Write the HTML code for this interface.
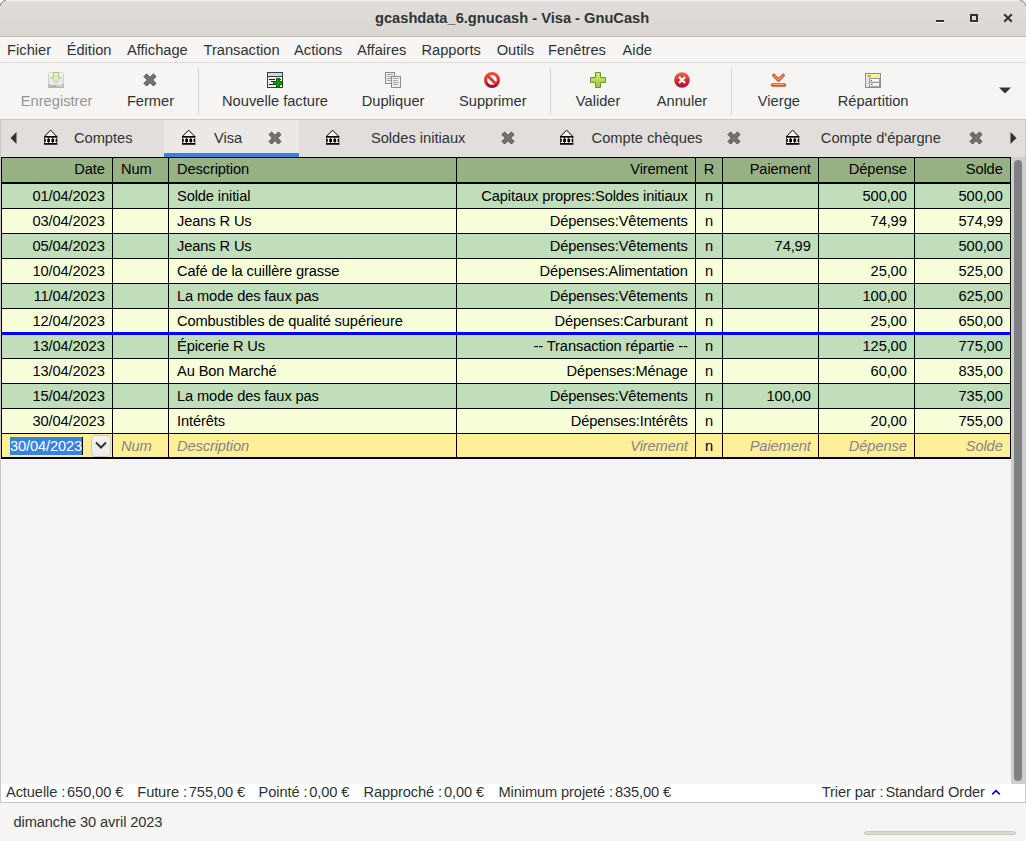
<!DOCTYPE html><html><head><meta charset="utf-8"><style>
*{margin:0;padding:0;box-sizing:border-box}
html,body{width:1026px;height:841px;overflow:hidden;background:#f6f5f4;font-family:"Liberation Sans", sans-serif;font-size:14.667px;color:#2e3436}
.a{position:absolute}
.t{position:absolute;line-height:17px;white-space:nowrap}
.c{position:absolute;line-height:17px;white-space:nowrap;text-align:center;width:160px}
.r{position:absolute;line-height:17px;white-space:nowrap;text-align:right}
.g{letter-spacing:-0.12px}
</style></head><body>
<div class="a" style="left:0;top:0;width:12px;height:12px;background:#fafafa"></div>
<div class="a" style="left:1014px;top:0;width:12px;height:12px;background:#fafafa"></div>
<div class="a" style="left:0;top:0;width:1026px;height:37px;background:linear-gradient(to top,#dad6d2,#e1dedb);border-radius:6px 6px 0 0;border-bottom:1px solid #bfb8b1;box-shadow:inset 0 1px 0 rgba(255,255,255,0.6)"></div>
<svg class="a" style="left:0;top:0" width="1026" height="12"><path d="M0.5 6A5.5 5.5 0 0 1 6 0.5" fill="none" stroke="#5a5a5a" stroke-opacity="0.7"/><path d="M1025.5 6A5.5 5.5 0 0 0 1020 0.5" fill="none" stroke="#5a5a5a" stroke-opacity="0.7"/></svg>
<div class="t" style="left:375px;top:10px;font-weight:bold;color:#2e3436">gcashdata_6.gnucash - Visa - GnuCash</div>
<div class="a" style="left:936px;top:20px;width:8px;height:2px;background:#2e3436;box-shadow:0 1px 0 rgba(255,255,255,0.8)"></div>
<div class="a" style="left:970px;top:14px;width:8px;height:8px;border:2px solid #2e3436;box-shadow:0 1px 0 rgba(255,255,255,0.8)"></div>
<svg class="a" style="left:1003px;top:13px" width="10" height="10" viewBox="0 0 10 10"><path d="M1.2 1.2L8.8 8.8M8.8 1.2L1.2 8.8" stroke="#2e3436" stroke-width="2"/></svg>
<div class="a" style="left:0;top:37px;width:1026px;height:26px;background:#f6f5f4;border-bottom:1px solid #dcdad8"></div>
<div class="t" style="left:7.1px;top:42px">Fichier</div>
<div class="t" style="left:66.7px;top:42px">Édition</div>
<div class="t" style="left:126.9px;top:42px">Affichage</div>
<div class="t" style="left:203.5px;top:42px">Transaction</div>
<div class="t" style="left:294.1px;top:42px">Actions</div>
<div class="t" style="left:357.0px;top:42px">Affaires</div>
<div class="t" style="left:421.4px;top:42px">Rapports</div>
<div class="t" style="left:496.7px;top:42px">Outils</div>
<div class="t" style="left:548.1px;top:42px">Fenêtres</div>
<div class="t" style="left:622.6px;top:42px">Aide</div>
<div class="a" style="left:0;top:63px;width:1026px;height:57px;background:#f6f5f4;border-bottom:1px solid #cdc7c2"></div>
<div class="c" style="left:-23.4px;top:93px;color:#929595">Enregistrer</div>
<div class="c" style="left:70.5px;top:93px;color:#2e3436">Fermer</div>
<div class="c" style="left:195.0px;top:93px;color:#2e3436">Nouvelle facture</div>
<div class="c" style="left:313.1px;top:93px;color:#2e3436">Dupliquer</div>
<div class="c" style="left:412.8px;top:93px;color:#2e3436">Supprimer</div>
<div class="c" style="left:518.1px;top:93px;color:#2e3436">Valider</div>
<div class="c" style="left:602.0px;top:93px;color:#2e3436">Annuler</div>
<div class="c" style="left:698.9px;top:93px;color:#2e3436">Vierge</div>
<div class="c" style="left:793.1px;top:93px;color:#2e3436">Répartition</div>
<div class="a" style="left:198px;top:67px;width:1px;height:48px;background:#d8d4d0"></div>
<div class="a" style="left:550px;top:67px;width:1px;height:48px;background:#d8d4d0"></div>
<div class="a" style="left:731px;top:67px;width:1px;height:48px;background:#d8d4d0"></div>
<svg class="a" style="left:998px;top:86px" width="14" height="8"><path d="M1 1.5H13L7 7.5Z" fill="#2e3436"/></svg>
<svg class="a" style="left:48px;top:72px" width="16" height="16" viewBox="0 0 16 16"><defs><linearGradient id="sg" x1="0" y1="0" x2="0" y2="1"><stop offset="0" stop-color="#f6f6f6"/><stop offset="1" stop-color="#e2e2e2"/></linearGradient></defs><path d="M1.5 0.5H14.5Q15.5 0.5 15.5 1.5V15.5H0.5V1.5Q0.5 0.5 1.5 0.5Z" fill="url(#sg)" stroke="#cfcfcf"/><rect x="0.5" y="12.5" width="15" height="3" fill="#cacaca" stroke="#b8b8b8"/><path d="M2 12.2H14" stroke="#fafafa"/><path d="M3 2.5V7M13 2.5V7" stroke="#e0e0e0"/><path d="M5.5 0.5H10.5V5.5H12.8L8 10.9L3.2 5.5H5.5Z" fill="#e2edbb" stroke="#a9ce8c"/><path d="M2 14H8.5" stroke="#9a9a9a"/></svg>
<svg class="a" style="left:142px;top:72px" width="16" height="16" viewBox="0 0 16 16"><path d="M2 4.6L4.6 2L8 5.4L11.4 2L14 4.6L10.6 8L14 11.4L11.4 14L8 10.6L4.6 14L2 11.4L5.4 8Z" fill="#737371" stroke="#4a4a48" stroke-width="1" stroke-linejoin="round"/></svg>
<svg class="a" style="left:267px;top:72px" width="16" height="16" viewBox="0 0 16 16"><rect x="0.5" y="0.5" width="15" height="15" fill="#ecebe9" stroke="#3c3c3c"/><rect x="1" y="1" width="14" height="3.5" fill="#c6dcf2"/><path d="M0.5 4.5H15.5" stroke="#3c3c3c"/><path d="M2 7.5H8M4 9.5H7M2 12.5H7" stroke="#222"/><path d="M12 7.5H14" stroke="#333"/><path d="M9.5 6.5H12.5V9.5H15.5V12.5H12.5V15.5H9.5V12.5H6.5V9.5H9.5Z" fill="#00a000" stroke="#005c00"/></svg>
<svg class="a" style="left:385px;top:72px" width="16" height="16" viewBox="0 0 16 16"><rect x="0.5" y="0.5" width="9" height="11" fill="#efefee" stroke="#8c8c8a"/><path d="M2 2.5H8M2 4.5H8M2 6.5H8M2 8.5H8" stroke="#a6a6a4"/><rect x="6.5" y="4.5" width="9" height="11" fill="#efefee" stroke="#8c8c8a"/><path d="M8 6.5H14M8 8.5H12.5M8 10.5H14M8 12.5H13" stroke="#a6a6a4"/></svg>
<svg class="a" style="left:484px;top:72px" width="16" height="16" viewBox="0 0 16 16"><defs><linearGradient id="dg" x1="0" y1="0" x2="0" y2="1"><stop offset="0" stop-color="#e8503a"/><stop offset="0.6" stop-color="#d03030"/><stop offset="1" stop-color="#98103c"/></linearGradient></defs><circle cx="8" cy="8" r="6.4" fill="#fbf5f5" stroke="url(#dg)" stroke-width="3.2"/><path d="M4.2 4.2L11.8 11.8" stroke="#d23838" stroke-width="2.8"/></svg>
<svg class="a" style="left:590px;top:72px" width="16" height="16" viewBox="0 0 16 16"><defs><linearGradient id="pg" x1="0" y1="0" x2="0" y2="1"><stop offset="0" stop-color="#d8ea6e"/><stop offset="1" stop-color="#a4c03a"/></linearGradient></defs><path d="M5.5 0.5H10.5V5.5H15.5V10.5H10.5V15.5H5.5V10.5H0.5V5.5H5.5Z" fill="url(#pg)" stroke="#5f9a2e"/></svg>
<svg class="a" style="left:674px;top:72px" width="16" height="16" viewBox="0 0 16 16"><defs><linearGradient id="cg" x1="0" y1="0" x2="0" y2="1"><stop offset="0" stop-color="#ee6a52"/><stop offset="0.55" stop-color="#d82a2a"/><stop offset="1" stop-color="#9c1040"/></linearGradient></defs><circle cx="8" cy="8" r="7.8" fill="url(#cg)"/><path d="M5 5L11 11M11 5L5 11" stroke="#fff" stroke-width="2.3"/></svg>
<svg class="a" style="left:770px;top:72px" width="16" height="16" viewBox="0 0 16 16"><path d="M3.8 3.4L8.5 8.1L13.2 3.4" fill="none" stroke="#c84c12" stroke-width="3.4" stroke-linecap="round" stroke-linejoin="round"/><path d="M3.8 3.4L8.5 8.1L13.2 3.4" fill="none" stroke="#f3a676" stroke-width="1.3" stroke-linecap="round" stroke-linejoin="round"/><path d="M2.7 13H14.3" stroke="#c84c12" stroke-width="3.6" stroke-linecap="round"/><path d="M2.7 12.6H14.3" stroke="#f3a676" stroke-width="1.1" stroke-linecap="round"/></svg>
<svg class="a" style="left:865px;top:72px" width="16" height="16" viewBox="0 0 16 16"><rect x="0.5" y="1.5" width="15" height="14" fill="#e4e4e4" stroke="#8e8e8e"/><rect x="1" y="2" width="14" height="3.6" fill="#f7f290"/><path d="M2.5 4H6" stroke="#6a6a50"/><rect x="4.5" y="6.5" width="10" height="3.6" fill="#fff" stroke="#959595"/><rect x="4.5" y="10.7" width="10" height="3.6" fill="#fff" stroke="#959595"/><circle cx="6.5" cy="8.4" r="0.6" fill="#444"/><path d="M6 12.5H7.5" stroke="#555"/></svg>
<div class="a" style="left:0;top:120px;width:1026px;height:37px;background:#e1dedb"></div>
<div class="a" style="left:164px;top:120px;width:135px;height:37px;background:#ebe8e6"></div>
<div class="a" style="left:164px;top:153px;width:135px;height:4px;background:#3584e4"></div>
<svg class="a" style="left:9px;top:131px" width="8" height="14"><path d="M7.5 1V13L1.5 7Z" fill="#2e3436"/></svg>
<svg class="a" style="left:1010px;top:131px" width="8" height="14"><path d="M0.5 1V13L6.5 7Z" fill="#2e3436"/></svg>
<svg class="a" style="left:44px;top:129px" width="14" height="16" viewBox="0 0 14 16"><path d="M6.6 1.1L12.9 7.6H0.3Z" fill="#f4f4f4" stroke="#000" stroke-width="1" stroke-linejoin="round"/><rect x="0" y="7.3" width="13.4" height="1.4" fill="#000"/><rect x="0.2" y="8.6" width="13" height="5.5" fill="#000"/><path d="M0.80 8.7H4.20V9.8H3.20V12.9H4.20V14H0.80V12.9H1.80V9.8H0.80Z M5.00 8.7H8.40V9.8H7.40V12.9H8.40V14H5.00V12.9H6.00V9.8H5.00Z M9.20 8.7H12.60V9.8H11.60V12.9H12.60V14H9.20V12.9H10.20V9.8H9.20Z" fill="#fff"/><rect x="0" y="14" width="13.4" height="1.8" rx="0.3" fill="#000"/></svg>
<div class="t" style="left:73.9px;top:130px">Comptes</div>
<svg class="a" style="left:182px;top:129px" width="14" height="16" viewBox="0 0 14 16"><path d="M6.6 1.1L12.9 7.6H0.3Z" fill="#f4f4f4" stroke="#000" stroke-width="1" stroke-linejoin="round"/><rect x="0" y="7.3" width="13.4" height="1.4" fill="#000"/><rect x="0.2" y="8.6" width="13" height="5.5" fill="#000"/><path d="M0.80 8.7H4.20V9.8H3.20V12.9H4.20V14H0.80V12.9H1.80V9.8H0.80Z M5.00 8.7H8.40V9.8H7.40V12.9H8.40V14H5.00V12.9H6.00V9.8H5.00Z M9.20 8.7H12.60V9.8H11.60V12.9H12.60V14H9.20V12.9H10.20V9.8H9.20Z" fill="#fff"/><rect x="0" y="14" width="13.4" height="1.8" rx="0.3" fill="#000"/></svg>
<div class="t" style="left:214.0px;top:130px">Visa</div>
<svg class="a" style="left:267px;top:130px" width="16" height="16" viewBox="0 0 16 16"><path d="M2 4.6L4.6 2L8 5.4L11.4 2L14 4.6L10.6 8L14 11.4L11.4 14L8 10.6L4.6 14L2 11.4L5.4 8Z" fill="#737371" stroke="#4a4a48" stroke-width="1" stroke-linejoin="round"/></svg>
<svg class="a" style="left:326px;top:129px" width="14" height="16" viewBox="0 0 14 16"><path d="M6.6 1.1L12.9 7.6H0.3Z" fill="#f4f4f4" stroke="#000" stroke-width="1" stroke-linejoin="round"/><rect x="0" y="7.3" width="13.4" height="1.4" fill="#000"/><rect x="0.2" y="8.6" width="13" height="5.5" fill="#000"/><path d="M0.80 8.7H4.20V9.8H3.20V12.9H4.20V14H0.80V12.9H1.80V9.8H0.80Z M5.00 8.7H8.40V9.8H7.40V12.9H8.40V14H5.00V12.9H6.00V9.8H5.00Z M9.20 8.7H12.60V9.8H11.60V12.9H12.60V14H9.20V12.9H10.20V9.8H9.20Z" fill="#fff"/><rect x="0" y="14" width="13.4" height="1.8" rx="0.3" fill="#000"/></svg>
<div class="t" style="left:370.9px;top:130px">Soldes initiaux</div>
<svg class="a" style="left:500px;top:130px" width="16" height="16" viewBox="0 0 16 16"><path d="M2 4.6L4.6 2L8 5.4L11.4 2L14 4.6L10.6 8L14 11.4L11.4 14L8 10.6L4.6 14L2 11.4L5.4 8Z" fill="#737371" stroke="#4a4a48" stroke-width="1" stroke-linejoin="round"/></svg>
<svg class="a" style="left:560px;top:129px" width="14" height="16" viewBox="0 0 14 16"><path d="M6.6 1.1L12.9 7.6H0.3Z" fill="#f4f4f4" stroke="#000" stroke-width="1" stroke-linejoin="round"/><rect x="0" y="7.3" width="13.4" height="1.4" fill="#000"/><rect x="0.2" y="8.6" width="13" height="5.5" fill="#000"/><path d="M0.80 8.7H4.20V9.8H3.20V12.9H4.20V14H0.80V12.9H1.80V9.8H0.80Z M5.00 8.7H8.40V9.8H7.40V12.9H8.40V14H5.00V12.9H6.00V9.8H5.00Z M9.20 8.7H12.60V9.8H11.60V12.9H12.60V14H9.20V12.9H10.20V9.8H9.20Z" fill="#fff"/><rect x="0" y="14" width="13.4" height="1.8" rx="0.3" fill="#000"/></svg>
<div class="t" style="left:591.6px;top:130px">Compte chèques</div>
<svg class="a" style="left:726px;top:130px" width="16" height="16" viewBox="0 0 16 16"><path d="M2 4.6L4.6 2L8 5.4L11.4 2L14 4.6L10.6 8L14 11.4L11.4 14L8 10.6L4.6 14L2 11.4L5.4 8Z" fill="#737371" stroke="#4a4a48" stroke-width="1" stroke-linejoin="round"/></svg>
<svg class="a" style="left:786px;top:129px" width="14" height="16" viewBox="0 0 14 16"><path d="M6.6 1.1L12.9 7.6H0.3Z" fill="#f4f4f4" stroke="#000" stroke-width="1" stroke-linejoin="round"/><rect x="0" y="7.3" width="13.4" height="1.4" fill="#000"/><rect x="0.2" y="8.6" width="13" height="5.5" fill="#000"/><path d="M0.80 8.7H4.20V9.8H3.20V12.9H4.20V14H0.80V12.9H1.80V9.8H0.80Z M5.00 8.7H8.40V9.8H7.40V12.9H8.40V14H5.00V12.9H6.00V9.8H5.00Z M9.20 8.7H12.60V9.8H11.60V12.9H12.60V14H9.20V12.9H10.20V9.8H9.20Z" fill="#fff"/><rect x="0" y="14" width="13.4" height="1.8" rx="0.3" fill="#000"/></svg>
<div class="t" style="left:820.8px;top:130px">Compte d'épargne</div>
<svg class="a" style="left:968px;top:130px" width="16" height="16" viewBox="0 0 16 16"><path d="M2 4.6L4.6 2L8 5.4L11.4 2L14 4.6L10.6 8L14 11.4L11.4 14L8 10.6L4.6 14L2 11.4L5.4 8Z" fill="#737371" stroke="#4a4a48" stroke-width="1" stroke-linejoin="round"/></svg>
<div class="a" style="left:1px;top:157px;width:1010px;height:302px;background:#000"></div>
<div class="a" style="left:2px;top:158px;width:110px;height:24px;background:#96b183"></div>
<div class="a" style="left:113px;top:158px;width:55px;height:24px;background:#96b183"></div>
<div class="a" style="left:169px;top:158px;width:287px;height:24px;background:#96b183"></div>
<div class="a" style="left:457px;top:158px;width:238px;height:24px;background:#96b183"></div>
<div class="a" style="left:696px;top:158px;width:26px;height:24px;background:#96b183"></div>
<div class="a" style="left:723px;top:158px;width:95px;height:24px;background:#96b183"></div>
<div class="a" style="left:819px;top:158px;width:95px;height:24px;background:#96b183"></div>
<div class="a" style="left:915px;top:158px;width:95px;height:24px;background:#96b183"></div>
<div class="r g" style="left:1px;width:103.7px;top:161px;color:#000">Date</div>
<div class="t g" style="left:121px;top:161px;color:#000">Num</div>
<div class="t g" style="left:177px;top:161px;color:#000">Description</div>
<div class="r g" style="left:456px;width:231.7px;top:161px;color:#000">Virement</div>
<div class="t" style="left:695px;width:28px;text-align:center;top:161px;color:#000">R</div>
<div class="r g" style="left:722px;width:88.7px;top:161px;color:#000">Paiement</div>
<div class="r g" style="left:818px;width:88.7px;top:161px;color:#000">Dépense</div>
<div class="r g" style="left:914px;width:88.7px;top:161px;color:#000">Solde</div>
<div class="a" style="left:2px;top:184px;width:110px;height:24px;background:#bfdeb9"></div>
<div class="a" style="left:113px;top:184px;width:55px;height:24px;background:#bfdeb9"></div>
<div class="a" style="left:169px;top:184px;width:287px;height:24px;background:#bfdeb9"></div>
<div class="a" style="left:457px;top:184px;width:238px;height:24px;background:#bfdeb9"></div>
<div class="a" style="left:696px;top:184px;width:26px;height:24px;background:#bfdeb9"></div>
<div class="a" style="left:723px;top:184px;width:95px;height:24px;background:#bfdeb9"></div>
<div class="a" style="left:819px;top:184px;width:95px;height:24px;background:#bfdeb9"></div>
<div class="a" style="left:915px;top:184px;width:95px;height:24px;background:#bfdeb9"></div>
<div class="r g" style="left:1px;width:103.7px;top:188px;color:#000">01/04/2023</div>
<div class="t g" style="left:177px;top:188px;color:#000">Solde initial</div>
<div class="r g" style="left:456px;width:231.7px;top:188px;color:#000">Capitaux propres:Soldes initiaux</div>
<div class="t" style="left:695px;width:28px;text-align:center;top:188px;color:#000">n</div>
<div class="r g" style="left:818px;width:88.7px;top:188px;color:#000">500,00</div>
<div class="r g" style="left:914px;width:88.7px;top:188px;color:#000">500,00</div>
<div class="a" style="left:2px;top:209px;width:110px;height:24px;background:#f6ffda"></div>
<div class="a" style="left:113px;top:209px;width:55px;height:24px;background:#f6ffda"></div>
<div class="a" style="left:169px;top:209px;width:287px;height:24px;background:#f6ffda"></div>
<div class="a" style="left:457px;top:209px;width:238px;height:24px;background:#f6ffda"></div>
<div class="a" style="left:696px;top:209px;width:26px;height:24px;background:#f6ffda"></div>
<div class="a" style="left:723px;top:209px;width:95px;height:24px;background:#f6ffda"></div>
<div class="a" style="left:819px;top:209px;width:95px;height:24px;background:#f6ffda"></div>
<div class="a" style="left:915px;top:209px;width:95px;height:24px;background:#f6ffda"></div>
<div class="r g" style="left:1px;width:103.7px;top:213px;color:#000">03/04/2023</div>
<div class="t g" style="left:177px;top:213px;color:#000">Jeans R Us</div>
<div class="r g" style="left:456px;width:231.7px;top:213px;color:#000">Dépenses:Vêtements</div>
<div class="t" style="left:695px;width:28px;text-align:center;top:213px;color:#000">n</div>
<div class="r g" style="left:818px;width:88.7px;top:213px;color:#000">74,99</div>
<div class="r g" style="left:914px;width:88.7px;top:213px;color:#000">574,99</div>
<div class="a" style="left:2px;top:234px;width:110px;height:24px;background:#bfdeb9"></div>
<div class="a" style="left:113px;top:234px;width:55px;height:24px;background:#bfdeb9"></div>
<div class="a" style="left:169px;top:234px;width:287px;height:24px;background:#bfdeb9"></div>
<div class="a" style="left:457px;top:234px;width:238px;height:24px;background:#bfdeb9"></div>
<div class="a" style="left:696px;top:234px;width:26px;height:24px;background:#bfdeb9"></div>
<div class="a" style="left:723px;top:234px;width:95px;height:24px;background:#bfdeb9"></div>
<div class="a" style="left:819px;top:234px;width:95px;height:24px;background:#bfdeb9"></div>
<div class="a" style="left:915px;top:234px;width:95px;height:24px;background:#bfdeb9"></div>
<div class="r g" style="left:1px;width:103.7px;top:238px;color:#000">05/04/2023</div>
<div class="t g" style="left:177px;top:238px;color:#000">Jeans R Us</div>
<div class="r g" style="left:456px;width:231.7px;top:238px;color:#000">Dépenses:Vêtements</div>
<div class="t" style="left:695px;width:28px;text-align:center;top:238px;color:#000">n</div>
<div class="r g" style="left:722px;width:88.7px;top:238px;color:#000">74,99</div>
<div class="r g" style="left:914px;width:88.7px;top:238px;color:#000">500,00</div>
<div class="a" style="left:2px;top:259px;width:110px;height:24px;background:#f6ffda"></div>
<div class="a" style="left:113px;top:259px;width:55px;height:24px;background:#f6ffda"></div>
<div class="a" style="left:169px;top:259px;width:287px;height:24px;background:#f6ffda"></div>
<div class="a" style="left:457px;top:259px;width:238px;height:24px;background:#f6ffda"></div>
<div class="a" style="left:696px;top:259px;width:26px;height:24px;background:#f6ffda"></div>
<div class="a" style="left:723px;top:259px;width:95px;height:24px;background:#f6ffda"></div>
<div class="a" style="left:819px;top:259px;width:95px;height:24px;background:#f6ffda"></div>
<div class="a" style="left:915px;top:259px;width:95px;height:24px;background:#f6ffda"></div>
<div class="r g" style="left:1px;width:103.7px;top:263px;color:#000">10/04/2023</div>
<div class="t g" style="left:177px;top:263px;color:#000">Café de la cuillère grasse</div>
<div class="r g" style="left:456px;width:231.7px;top:263px;color:#000">Dépenses:Alimentation</div>
<div class="t" style="left:695px;width:28px;text-align:center;top:263px;color:#000">n</div>
<div class="r g" style="left:818px;width:88.7px;top:263px;color:#000">25,00</div>
<div class="r g" style="left:914px;width:88.7px;top:263px;color:#000">525,00</div>
<div class="a" style="left:2px;top:284px;width:110px;height:24px;background:#bfdeb9"></div>
<div class="a" style="left:113px;top:284px;width:55px;height:24px;background:#bfdeb9"></div>
<div class="a" style="left:169px;top:284px;width:287px;height:24px;background:#bfdeb9"></div>
<div class="a" style="left:457px;top:284px;width:238px;height:24px;background:#bfdeb9"></div>
<div class="a" style="left:696px;top:284px;width:26px;height:24px;background:#bfdeb9"></div>
<div class="a" style="left:723px;top:284px;width:95px;height:24px;background:#bfdeb9"></div>
<div class="a" style="left:819px;top:284px;width:95px;height:24px;background:#bfdeb9"></div>
<div class="a" style="left:915px;top:284px;width:95px;height:24px;background:#bfdeb9"></div>
<div class="r g" style="left:1px;width:103.7px;top:288px;color:#000">11/04/2023</div>
<div class="t g" style="left:177px;top:288px;color:#000">La mode des faux pas</div>
<div class="r g" style="left:456px;width:231.7px;top:288px;color:#000">Dépenses:Vêtements</div>
<div class="t" style="left:695px;width:28px;text-align:center;top:288px;color:#000">n</div>
<div class="r g" style="left:818px;width:88.7px;top:288px;color:#000">100,00</div>
<div class="r g" style="left:914px;width:88.7px;top:288px;color:#000">625,00</div>
<div class="a" style="left:2px;top:309px;width:110px;height:24px;background:#f6ffda"></div>
<div class="a" style="left:113px;top:309px;width:55px;height:24px;background:#f6ffda"></div>
<div class="a" style="left:169px;top:309px;width:287px;height:24px;background:#f6ffda"></div>
<div class="a" style="left:457px;top:309px;width:238px;height:24px;background:#f6ffda"></div>
<div class="a" style="left:696px;top:309px;width:26px;height:24px;background:#f6ffda"></div>
<div class="a" style="left:723px;top:309px;width:95px;height:24px;background:#f6ffda"></div>
<div class="a" style="left:819px;top:309px;width:95px;height:24px;background:#f6ffda"></div>
<div class="a" style="left:915px;top:309px;width:95px;height:24px;background:#f6ffda"></div>
<div class="r g" style="left:1px;width:103.7px;top:313px;color:#000">12/04/2023</div>
<div class="t g" style="left:177px;top:313px;color:#000">Combustibles de qualité supérieure</div>
<div class="r g" style="left:456px;width:231.7px;top:313px;color:#000">Dépenses:Carburant</div>
<div class="t" style="left:695px;width:28px;text-align:center;top:313px;color:#000">n</div>
<div class="r g" style="left:818px;width:88.7px;top:313px;color:#000">25,00</div>
<div class="r g" style="left:914px;width:88.7px;top:313px;color:#000">650,00</div>
<div class="a" style="left:2px;top:334px;width:110px;height:24px;background:#bfdeb9"></div>
<div class="a" style="left:113px;top:334px;width:55px;height:24px;background:#bfdeb9"></div>
<div class="a" style="left:169px;top:334px;width:287px;height:24px;background:#bfdeb9"></div>
<div class="a" style="left:457px;top:334px;width:238px;height:24px;background:#bfdeb9"></div>
<div class="a" style="left:696px;top:334px;width:26px;height:24px;background:#bfdeb9"></div>
<div class="a" style="left:723px;top:334px;width:95px;height:24px;background:#bfdeb9"></div>
<div class="a" style="left:819px;top:334px;width:95px;height:24px;background:#bfdeb9"></div>
<div class="a" style="left:915px;top:334px;width:95px;height:24px;background:#bfdeb9"></div>
<div class="r g" style="left:1px;width:103.7px;top:338px;color:#000">13/04/2023</div>
<div class="t g" style="left:177px;top:338px;color:#000">Épicerie R Us</div>
<div class="r g" style="left:456px;width:231.7px;top:338px;color:#000">-- Transaction répartie --</div>
<div class="t" style="left:695px;width:28px;text-align:center;top:338px;color:#000">n</div>
<div class="r g" style="left:818px;width:88.7px;top:338px;color:#000">125,00</div>
<div class="r g" style="left:914px;width:88.7px;top:338px;color:#000">775,00</div>
<div class="a" style="left:2px;top:359px;width:110px;height:24px;background:#f6ffda"></div>
<div class="a" style="left:113px;top:359px;width:55px;height:24px;background:#f6ffda"></div>
<div class="a" style="left:169px;top:359px;width:287px;height:24px;background:#f6ffda"></div>
<div class="a" style="left:457px;top:359px;width:238px;height:24px;background:#f6ffda"></div>
<div class="a" style="left:696px;top:359px;width:26px;height:24px;background:#f6ffda"></div>
<div class="a" style="left:723px;top:359px;width:95px;height:24px;background:#f6ffda"></div>
<div class="a" style="left:819px;top:359px;width:95px;height:24px;background:#f6ffda"></div>
<div class="a" style="left:915px;top:359px;width:95px;height:24px;background:#f6ffda"></div>
<div class="r g" style="left:1px;width:103.7px;top:363px;color:#000">13/04/2023</div>
<div class="t g" style="left:177px;top:363px;color:#000">Au Bon Marché</div>
<div class="r g" style="left:456px;width:231.7px;top:363px;color:#000">Dépenses:Ménage</div>
<div class="t" style="left:695px;width:28px;text-align:center;top:363px;color:#000">n</div>
<div class="r g" style="left:818px;width:88.7px;top:363px;color:#000">60,00</div>
<div class="r g" style="left:914px;width:88.7px;top:363px;color:#000">835,00</div>
<div class="a" style="left:2px;top:384px;width:110px;height:24px;background:#bfdeb9"></div>
<div class="a" style="left:113px;top:384px;width:55px;height:24px;background:#bfdeb9"></div>
<div class="a" style="left:169px;top:384px;width:287px;height:24px;background:#bfdeb9"></div>
<div class="a" style="left:457px;top:384px;width:238px;height:24px;background:#bfdeb9"></div>
<div class="a" style="left:696px;top:384px;width:26px;height:24px;background:#bfdeb9"></div>
<div class="a" style="left:723px;top:384px;width:95px;height:24px;background:#bfdeb9"></div>
<div class="a" style="left:819px;top:384px;width:95px;height:24px;background:#bfdeb9"></div>
<div class="a" style="left:915px;top:384px;width:95px;height:24px;background:#bfdeb9"></div>
<div class="r g" style="left:1px;width:103.7px;top:388px;color:#000">15/04/2023</div>
<div class="t g" style="left:177px;top:388px;color:#000">La mode des faux pas</div>
<div class="r g" style="left:456px;width:231.7px;top:388px;color:#000">Dépenses:Vêtements</div>
<div class="t" style="left:695px;width:28px;text-align:center;top:388px;color:#000">n</div>
<div class="r g" style="left:722px;width:88.7px;top:388px;color:#000">100,00</div>
<div class="r g" style="left:914px;width:88.7px;top:388px;color:#000">735,00</div>
<div class="a" style="left:2px;top:409px;width:110px;height:24px;background:#f6ffda"></div>
<div class="a" style="left:113px;top:409px;width:55px;height:24px;background:#f6ffda"></div>
<div class="a" style="left:169px;top:409px;width:287px;height:24px;background:#f6ffda"></div>
<div class="a" style="left:457px;top:409px;width:238px;height:24px;background:#f6ffda"></div>
<div class="a" style="left:696px;top:409px;width:26px;height:24px;background:#f6ffda"></div>
<div class="a" style="left:723px;top:409px;width:95px;height:24px;background:#f6ffda"></div>
<div class="a" style="left:819px;top:409px;width:95px;height:24px;background:#f6ffda"></div>
<div class="a" style="left:915px;top:409px;width:95px;height:24px;background:#f6ffda"></div>
<div class="r g" style="left:1px;width:103.7px;top:413px;color:#000">30/04/2023</div>
<div class="t g" style="left:177px;top:413px;color:#000">Intérêts</div>
<div class="r g" style="left:456px;width:231.7px;top:413px;color:#000">Dépenses:Intérêts</div>
<div class="t" style="left:695px;width:28px;text-align:center;top:413px;color:#000">n</div>
<div class="r g" style="left:818px;width:88.7px;top:413px;color:#000">20,00</div>
<div class="r g" style="left:914px;width:88.7px;top:413px;color:#000">755,00</div>
<div class="a" style="left:2px;top:332px;width:1008px;height:3px;background:#0000ff"></div>
<div class="a" style="left:2px;top:434px;width:110px;height:23px;background:#ffef98"></div>
<div class="a" style="left:113px;top:434px;width:55px;height:23px;background:#ffef98"></div>
<div class="a" style="left:169px;top:434px;width:287px;height:23px;background:#ffef98"></div>
<div class="a" style="left:457px;top:434px;width:238px;height:23px;background:#ffef98"></div>
<div class="a" style="left:696px;top:434px;width:26px;height:23px;background:#ffef98"></div>
<div class="a" style="left:723px;top:434px;width:95px;height:23px;background:#ffef98"></div>
<div class="a" style="left:819px;top:434px;width:95px;height:23px;background:#ffef98"></div>
<div class="a" style="left:915px;top:434px;width:95px;height:23px;background:#ffef98"></div>
<div class="a" style="left:10px;top:437px;width:72px;height:18px;background:#3584e4"></div>
<div class="t g" style="left:10px;top:438px;color:#fff">30/04/2023</div>
<div class="a" style="left:82px;top:437px;width:1px;height:18px;background:#000"></div>
<div class="a" style="left:91px;top:435px;width:20px;height:22px;border:1px solid #cdc7c2;border-radius:4px;background:linear-gradient(#f4f3f2,#edebe9)"></div>
<svg class="a" style="left:95px;top:441px" width="12" height="9"><path d="M1 1.5L6 6.5L11 1.5" fill="none" stroke="#2e3436" stroke-width="2"/></svg>
<div class="t g" style="left:121px;top:438px;color:#858585;font-style:italic">Num</div>
<div class="t g" style="left:177px;top:438px;color:#858585;font-style:italic">Description</div>
<div class="r g" style="left:456px;width:231.7px;top:438px;color:#858585;font-style:italic">Virement</div>
<div class="r g" style="left:722px;width:88.7px;top:438px;color:#858585;font-style:italic">Paiement</div>
<div class="r g" style="left:818px;width:88.7px;top:438px;color:#858585;font-style:italic">Dépense</div>
<div class="r g" style="left:914px;width:88.7px;top:438px;color:#858585;font-style:italic">Solde</div>
<div class="t" style="left:695px;width:28px;text-align:center;top:438px;color:#000">n</div>
<div class="a" style="left:1011px;top:157px;width:14px;height:627px;background:#cecece"></div>
<div class="a" style="left:1014px;top:160px;width:8px;height:621px;background:#7f8183;border-radius:4px"></div>
<div class="a" style="left:0;top:120px;width:1px;height:683px;background:#cdc7c2"></div>
<div class="a" style="left:1025px;top:120px;width:1px;height:683px;background:#cdc7c2"></div>
<div class="a" style="left:0;top:784px;width:1026px;height:19px;background:#fff;border-bottom:1px solid #cdc7c2;border-right:1px solid #cdc7c2;border-left:1px solid #cdc7c2"></div>
<div class="t g" style="left:6.0px;top:784px;color:#2e3436">Actuelle :<span style='margin-left:2px'></span>650,00 €</div>
<div class="t g" style="left:137.3px;top:784px;color:#2e3436">Future :<span style='margin-left:2px'></span>755,00 €</div>
<div class="t g" style="left:258.6px;top:784px;color:#2e3436">Pointé :<span style='margin-left:2px'></span>0,00 €</div>
<div class="t g" style="left:363.5px;top:784px;color:#2e3436">Rapproché :<span style='margin-left:2px'></span>0,00 €</div>
<div class="t g" style="left:498.5px;top:784px;color:#2e3436">Minimum projeté :<span style='margin-left:2px'></span>835,00 €</div>
<div class="t g" style="left:821.8px;top:784px;color:#2e3436">Trier par :<span style='margin-left:2px'></span>Standard Order</div>
<svg class="a" style="left:991px;top:789px" width="10" height="7"><path d="M1.2 5.3L5 1.6L8.8 5.3" fill="none" stroke="#0000ff" stroke-width="1.7"/></svg>
<div class="t g" style="left:13.5px;top:814px">dimanche 30 avril 2023</div>
<div class="a" style="left:864px;top:831px;width:152px;height:4px;background:#dcd8d4;border:1px solid #cdc7c2;border-radius:3px"></div>
</body></html>
